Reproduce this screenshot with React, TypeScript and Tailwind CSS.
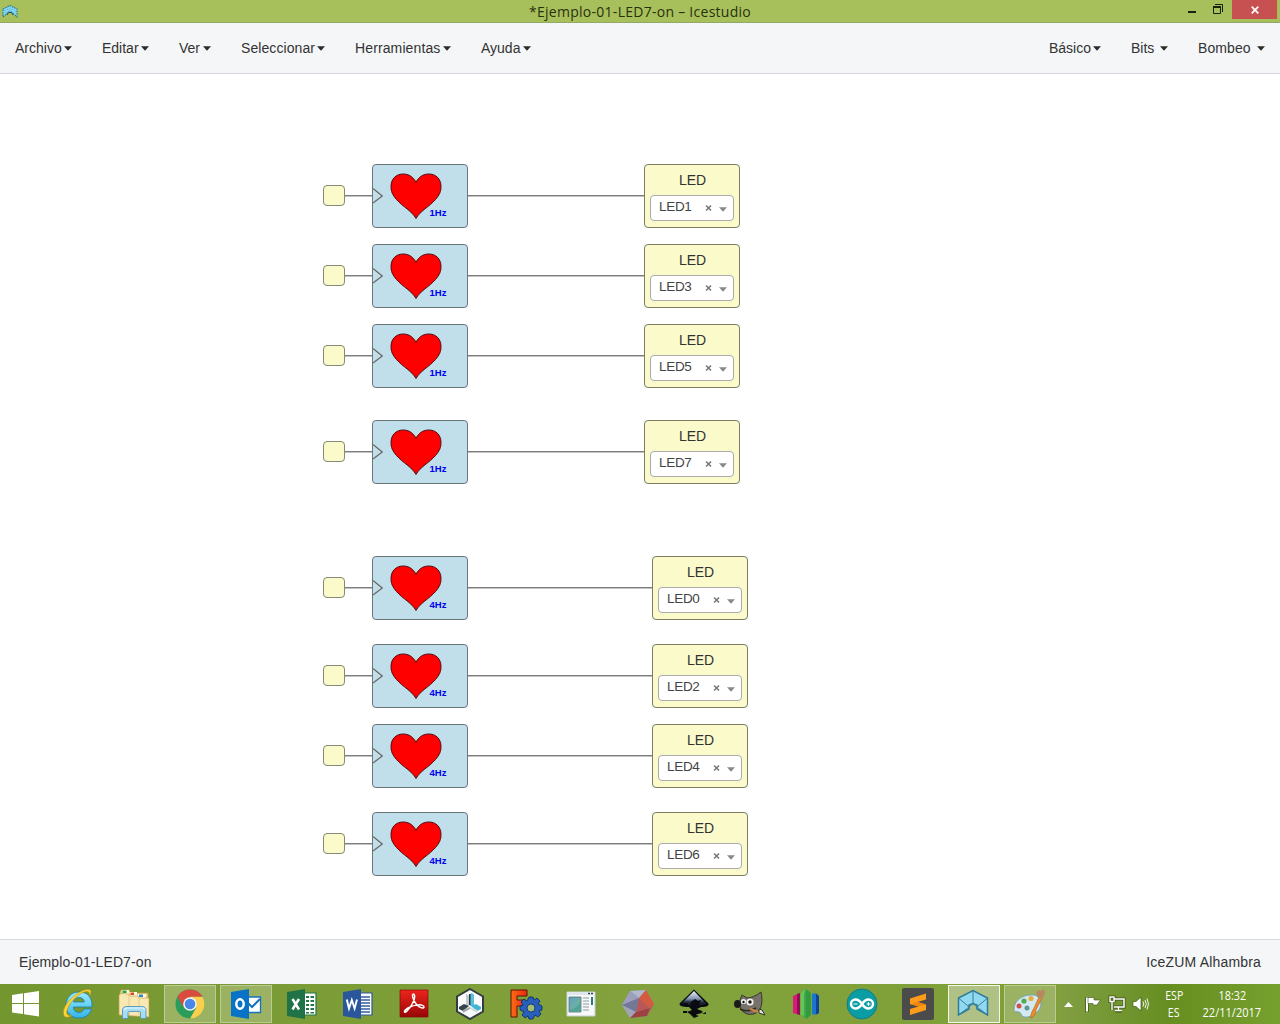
import type { ReactNode } from 'react';

const sans = "font-['Liberation_Sans',Arial,sans-serif]";

function Caret() {
  return (
    <svg width="8" height="5" viewBox="0 0 8 5" className="mt-px shrink-0">
      <path d="M0 .3H8L4 4.700Z" fill="#2b2b2b" />
    </svg>
  );
}

function MenuItem({ label, width, gap = 'gap-[2px]' }: { label: string; width: string; gap?: string }) {
  return (
    <button className={`flex h-[50px] items-center px-[15px] box-content ${gap}`}>
      <span className={`${width} whitespace-nowrap text-left`}>{label}</span>
      <Caret />
    </button>
  );
}

function TitleBar() {
  return (
    <header className="relative flex h-[23px] items-start justify-between border-b border-[#93a866] bg-[#a8c05c]">
      <svg width="16" height="13" viewBox="0 0 16 13" className="ml-[2px] mt-[5px]">
        <path d="M1 4L5 2L8 .5L11 2L15 4V12L11.500 9L9.500 7H6.500L4.500 9L1 12Z" fill="#7fd6f4" stroke="#2f7485" strokeWidth="1.100" strokeDasharray="1.5 1" />
        <path d="M5 2L6.500 7M11 2L9.500 7M1 4L5 9M15 4L11 9M8 1V7" stroke="#4ca5bd" strokeWidth=".7" fill="none" strokeDasharray="1 1" />
        <path d="M5 10L6.500 7.500H9.500L11 10" stroke="#24535f" fill="none" />
      </svg>
      <h1 className="absolute left-[529px] top-[1px] w-[224px] whitespace-nowrap font-['Open_Sans',sans-serif] text-[14px] leading-[21px] tracking-[0.27px] text-[#28310f]">
        *Ejemplo-01-LED7-on – Icestudio
      </h1>
      <div className="flex items-start pr-[3px]">
        <svg width="46" height="19" viewBox="0 0 46 19">
          <path d="M2 11H10V13H2Z" fill="#1c210f" />
          <path d="M27.500 6.500H34.500V13.500H27.500Z" fill="none" stroke="#1c210f" />
          <path d="M27 6H35V8H27Z" fill="#1c210f" />
          <path d="M29 4.500H36.500V12" fill="none" stroke="#1c210f" />
        </svg>
        <div className="flex h-[19px] w-[45px] items-center justify-center bg-[#c75050]">
          <svg width="8" height="8" viewBox="0 0 8 8">
            <path d="M.7 .7L7.300 7.300M7.300 .7L.7 7.300" stroke="#fff" strokeWidth="1.700" />
          </svg>
        </div>
      </div>
    </header>
  );
}

function Heart() {
  return (
    <svg width="52" height="47" viewBox="0 0 52 47" className="absolute left-[16.500px] top-[7.500px]">
      <path
        d="M26 45.500C22 38 13 34 6.500 26.500C2.500 22 1 18.500 1 13.500C1 6 6 1 13 1C19 1 23.500 4 26 9.500C28.500 4 33 1 39 1C46 1 51 6 51 13.500C51 18.500 49.500 22 45.500 26.500C39 34 30 38 26 45.500Z"
        fill="#f00"
        stroke="#4a1010"
      />
    </svg>
  );
}

type Row = { top: string; hz: string; led: string; shifted?: boolean };

const rows: Row[] = [
  { top: 'top-[90px]', hz: '1Hz', led: 'LED1' },
  { top: 'top-[170px]', hz: '1Hz', led: 'LED3' },
  { top: 'top-[250px]', hz: '1Hz', led: 'LED5' },
  { top: 'top-[346px]', hz: '1Hz', led: 'LED7' },
  { top: 'top-[482px]', hz: '4Hz', led: 'LED0', shifted: true },
  { top: 'top-[570px]', hz: '4Hz', led: 'LED2', shifted: true },
  { top: 'top-[650px]', hz: '4Hz', led: 'LED4', shifted: true },
  { top: 'top-[738px]', hz: '4Hz', led: 'LED6', shifted: true },
];

const wire = 'h-[2px] border-t border-b border-t-[#7c7c7c] border-b-[#c4c4c4]';

function Circuit({ top, hz, led, shifted }: Row) {
  return (
    <div className={`absolute left-[323px] flex h-16 items-center ${top}`}>
      <div className="-mt-px h-[21px] w-[22px] rounded-[4px] border border-[#888877] bg-[#fafacb]" />
      <div className={`w-[27px] ${wire}`} />
      <div className="relative h-16 w-24 rounded-[4px] border border-[#6b757a] bg-[#c0dfeb]">
        <svg width="11" height="18" viewBox="0 0 11 18" className="absolute left-0 top-[22px]">
          <path d="M0 1.500L9.300 9L0 16" fill="none" stroke="#666" strokeWidth="1.200" />
        </svg>
        <Heart />
        <span className="absolute left-[56px] top-[42px] w-[18px] text-center text-[9.500px] font-bold leading-[12px] text-[#0000f0]">{hz}</span>
      </div>
      <div className={`${wire} ${shifted ? 'w-[184px]' : 'w-[176px]'}`} />
      <div className="flex h-16 w-24 flex-col items-center rounded-[4px] border border-[#7d7d66] bg-[#fafacb] pt-[7px]">
        <span className="pl-px text-[14px] leading-[17px] tracking-[-0.1px] text-[#333]">LED</span>
        <div className="mt-[6px] flex h-[26px] w-[84px] items-center rounded-[4px] border border-[#aaa] bg-white pl-2 text-[#444]">
          <span className="-mt-[2px] w-[34px] text-[13.500px] leading-[24px] tracking-[-0.3px]">{led}</span>
          <svg width="7" height="6" viewBox="0 0 7 6" className="ml-[12px]">
            <path d="M1 .5L6 5.500M6 .5L1 5.500" stroke="#777" strokeWidth="1.500" />
          </svg>
          <svg width="8" height="5" viewBox="0 0 8 5" className="ml-[7px] mt-[3px]">
            <path d="M0 .3H8L4 4.800Z" fill="#888" />
          </svg>
        </div>
      </div>
    </div>
  );
}

const WindowsIcon = (
  <svg width="28" height="28" viewBox="0 0 28 28" className="-ml-px">
    <path d="M1 5L12 3.300V13H1ZM13 3.200L28 1V13H13ZM1 14H12V24L1 22.500ZM13 14H28V26.500L13 24.200Z" fill="#fff" />
  </svg>
);

const IeIcon = (
  <svg width="32" height="32" viewBox="0 0 32 32">
    <defs>
      <linearGradient id="ie" x2="0" y2="1"><stop stopColor="#9cecff" /><stop offset="1" stopColor="#34b4e8" /></linearGradient>
    </defs>
    <path d="M17 4C9 4 4 10 4 17C4 25 9.500 30 17 30C23 30 27.500 27 29.500 21H22C21 23.500 19.500 24.500 17 24.500C13.500 24.500 11.500 22 11.300 19H30C30.500 10 26 4 17 4ZM11.500 14C12 11 14 9.500 17 9.500C20 9.500 22 11 22.300 14Z" fill="url(#ie)" stroke="#1580b4" strokeWidth=".8" />
    <path d="M27.500 8C30 4 29.500 1 25 1.500C16 2.500 0 16 1.500 26C2.200 30 6 30 10 27.500C6 28 4 26.500 5 22.500C7 14 18 4.500 24 3.500C27 3 28 5 27.500 8Z" fill="#f9d633" stroke="#b98f18" strokeWidth=".6" />
  </svg>
);

const ExplorerIcon = (
  <svg width="34" height="32" viewBox="0 0 34 32">
    <path d="M3 4L4 2H12L14 5H31V27H3Z" fill="#ecd584" stroke="#bd9540" strokeWidth=".8" />
    <path d="M5 2H12V8H5ZM13 4H20V10H13ZM21 6H29V11H21Z" fill="#fff8df" />
    <path d="M5.500 2.500H9.500V5H5.500Z" fill="#23a944" /><path d="M13.500 4.500H17V7H13.500Z" fill="#d34b25" /><path d="M22 6.500H26V9H22Z" fill="#3088c9" />
    <path d="M2 7L4 5.500L12 6L13 8H21L22 10L32 10V29L2 27Z" fill="#f8e9b2" stroke="#c59f50" strokeWidth=".7" />
    <path d="M12 6V27M22 10V27" stroke="#dfc07a" strokeWidth=".8" />
    <path d="M5.500 30.500V22C5.500 19.500 7.500 18.500 10 18.500H25C27.500 18.500 29 20 29 22V30.500H23.500V25C23.500 24 23 23.500 22 23.500H13C11.500 23.500 11 24 11 25V30.500Z" fill="#a8dcf2" stroke="#5594bd" strokeWidth=".9" />
    <path d="M7 22L9 20H26L28 22" fill="none" stroke="#e5f8ff" strokeWidth="1.200" />
  </svg>
);

const ChromeIcon = (
  <svg width="30" height="30" viewBox="0 0 30 30">
    <circle cx="15" cy="15" r="14.500" fill="#2b9d5a" />
    <path d="M2.440 7.750A14.500 14.500 0 0 1 27.560 7.750H15L8.700 18.600Z" fill="#d94b3d" />
    <path d="M27.560 7.750A14.500 14.500 0 0 1 15 29.500L21.300 18.600L15 7.750Z" fill="#f9cf4d" />
    <circle cx="15" cy="15" r="6.800" fill="#f4f4f1" /><circle cx="15" cy="15" r="5.300" fill="#4687e9" />
  </svg>
);

const OutlookIcon = (
  <svg width="32" height="32" viewBox="0 0 32 32">
    <path d="M16 9H30.500V24.500H16Z" fill="#fff" stroke="#1672be" strokeWidth="1.300" />
    <path d="M18 15L22 19L30 11" fill="none" stroke="#1672be" strokeWidth="2" />
    <path d="M1 4L19 1V31L1 28Z" fill="#0873c6" />
    <ellipse cx="10" cy="16" rx="3.700" ry="4.700" fill="none" stroke="#fff" strokeWidth="2.500" />
  </svg>
);

function OfficeIcon({ kind }: { kind: 'X' | 'W' }) {
  const excel = kind === 'X';
  return (
    <svg width="32" height="32" viewBox="0 0 32 32">
      <path d="M17 5H30V27H17Z" fill="#fff" stroke={excel ? '#237746' : '#2b58a0'} strokeWidth="1.200" />
      {excel ? (
        <path d="M20 8H23V10H20ZM24.500 8H28V10H24.500ZM20 12H23V14H20ZM24.500 12H28V14H24.500ZM20 16H23V18H20ZM24.500 16H28V18H24.500ZM20 20H23V22H20ZM24.500 20H28V22H24.500ZM20 24H23V25.500H20ZM24.500 24H28V25.500H24.500Z" fill="#237746" />
      ) : (
        <path d="M19 9H28M19 12H28M19 15H28M19 18H28M19 21H28M19 24H28" stroke="#345f9f" strokeWidth="1.300" />
      )}
      <path d="M1 4L19 1V31L1 28Z" fill={excel ? '#207346' : '#2a579b'} />
      {excel ? (
        <path d="M6.500 11L13 21.500M13 11L6.500 21.500" stroke="#fff" strokeWidth="2.500" />
      ) : (
        <path d="M4.800 11.500L7 20.500L9.800 12L12.600 20.500L15 11.500" stroke="#fff" strokeWidth="1.900" fill="none" />
      )}
    </svg>
  );
}

const AcrobatIcon = (
  <svg width="30" height="30" viewBox="0 0 30 30">
    <defs><linearGradient id="pdf" x2="0" y2="1"><stop stopColor="#ee241d" /><stop offset="1" stopColor="#970606" /></linearGradient></defs>
    <path d="M1 1H29V28H1Z" fill="url(#pdf)" stroke="#880d0a" strokeWidth=".7" />
    <path d="M14.500 5C12.500 5 13.500 11 18 16C21 19 25 20 25 18C25 15 16 15 9 19C4 22 5 25 8 22C12 18 16 11 15.700 7C15.500 5.500 15.200 5 14.500 5Z" fill="none" stroke="#fff" strokeWidth="1.500" />
  </svg>
);

const HexIcon = (
  <svg width="30" height="32" viewBox="0 0 30 32">
    <path d="M15 1L28 8.500V23.500L15 31L2 23.500V8.500Z" fill="#fbfbfb" stroke="#333c43" strokeWidth="2" />
    <path d="M11 6L15 8V17L11 19Z" fill="#c3cbd0" /><path d="M15 6L19 7V18L15 17Z" fill="#2c3b43" />
    <path d="M15 6L17 5L19 7V18H15Z" fill="#56bfda" /><path d="M14 6H15.500V17H14Z" fill="#2c3b43" />
    <path d="M16 18L21 16L26 19V21L22 23Z" fill="#43b5d2" /><path d="M15 19L22 22V25L15 21Z" fill="#d5dcdf" />
    <path d="M14 18L9 16L4 19V21L8 23Z" fill="#37434a" /><path d="M15 19L8 22V25L15 21Z" fill="#a2abb0" />
  </svg>
);

const FreeCadIcon = (
  <svg width="34" height="32" viewBox="0 0 34 32">
    <defs><linearGradient id="fc" x2="1"><stop stopColor="#ff6b16" /><stop offset="1" stopColor="#e82a12" /></linearGradient></defs>
    <path d="M2 2H18V8H8V12H16V18H8V29H2Z" fill="url(#fc)" stroke="#611306" />
    <g transform="translate(22 20)" fill="#285fba" stroke="#07286a" strokeWidth=".8">
      <path d="M-2 -11H2L3 -8L6 -10L9 -7L7 -4L11 -2V2L8 3L10 6L7 9L4 7L2 11H-2L-3 8L-6 10L-9 7L-7 4L-11 2V-2L-8 -3L-10 -6L-7 -9L-4 -7Z" />
      <circle r="4" fill="#a5bc70" />
    </g>
  </svg>
);

const WindowIcon = (
  <svg width="32" height="28" viewBox="0 0 32 28" className="-ml-[2px]">
    <defs><linearGradient id="screen" x2="1" y2="1"><stop stopColor="#609ec3" /><stop offset="1" stopColor="#79bd8a" /></linearGradient></defs>
    <path d="M2 2H30V26H2Z" fill="#f6f8f9" stroke="#c8cfd1" /><path d="M2 2H30V5H2Z" fill="#dfe7ec" />
    <path d="M23 3.500H25M26 3.500H28" stroke="#344752" strokeWidth="1.300" />
    <path d="M4 7H16V22H4Z" fill="url(#screen)" stroke="#527581" strokeWidth=".8" />
    <path d="M5 20Q12 18 15 12V21H5Z" fill="#51a39b" />
    <path d="M18 8H24M18 11H24M18 14H24M18 17H24M18 20H24" stroke="#929b9f" />
    <path d="M26 7H28V15H26Z" fill="#287a80" />
  </svg>
);

const PolyIcon = (
  <svg width="34" height="30" viewBox="0 0 34 30">
    <path d="M9 2L25 1L33 15L26 27L9 29L1 16Z" fill="#8d91ae" />
    <path d="M9 2L25 1L18 9Z" fill="#b4b8cf" /><path d="M9 2L1 16L18 9Z" fill="#9ca0bc" />
    <path d="M1 16L18 9L15 23Z" fill="#747898" /><path d="M1 16L15 23L9 29Z" fill="#a0a4b7" />
    <path d="M18 9L15 23L29 19Z" fill="#b85755" /><path d="M25 1L33 15L29 19L18 9Z" fill="#d45a40" />
    <path d="M29 19L26 27L9 29L15 23Z" fill="#9d4141" /><path d="M29 19L33 15L26 27Z" fill="#c24e45" />
  </svg>
);

const InkscapeIcon = (
  <svg width="32" height="32" viewBox="0 0 32 32">
    <defs><linearGradient id="ink" x2="0" y2="1"><stop stopColor="#eef4ff" /><stop offset=".5" stopColor="#8797b5" /><stop offset=".75" stopColor="#222a3a" /><stop offset="1" stopColor="#131519" /></linearGradient></defs>
    <path d="M16 1.500L30 15C32 18 28 19 23 19L19 21L24 23C27 25 18 26 18 27L21 28L16 30L14 28L12 26L9 24L14 22L11 19C5 19 0 18 2 15Z" fill="#090b10" />
    <path d="M16 3L28 15.500C25 18 20 17 19 18L16 15L12 18L9 15L3.500 15.500Z" fill="url(#ink)" />
    <path d="M13 14L17 11L20 13L23 12L20 19H12Z" fill="#0a0c12" />
    <path d="M5 23H9V25H5ZM24 26L28 24V26Z" fill="#090b10" />
  </svg>
);

const GimpIcon = (
  <svg width="34" height="32" viewBox="0 0 34 32">
    <path d="M7 12L9 7L14 10C18 10 23 8 28 4C30 13 29 22 23 25C16 29 6 24 7 16Z" fill="#777169" stroke="#373630" />
    <ellipse cx="4.500" cy="16" rx="3.500" ry="4" fill="#1b1c1a" />
    <circle cx="10.500" cy="13.500" r="2.600" fill="#eee" /><circle cx="17" cy="14" r="3.600" fill="#eee" />
    <circle cx="10.500" cy="14" r="1.200" fill="#111" /><circle cx="17" cy="14" r="1.700" fill="#111" />
    <path d="M7 21Q15 25 23 20" fill="none" stroke="#292923" strokeWidth="1.500" />
    <path d="M17 21L28 25" stroke="#d0873a" strokeWidth="2" /><path d="M26 21L29 22L32 27L26 25Z" fill="#dbe3e5" stroke="#34342e" />
  </svg>
);

const CrystalsIcon = (
  <svg width="30" height="32" viewBox="0 0 30 32">
    <path d="M2 8L9 5V27L2 25Z" fill="#db1a7c" /><path d="M6 6L9 5V27L6 26Z" fill="#8c1252" />
    <path d="M21 6L24 5L28 8V25L24 27L21 26Z" fill="#1d74cf" /><path d="M25 5.500L28 8V25L25 26.500Z" fill="#0e459a" />
    <path d="M10 5L15 1L20 5V27L15 31L10 27Z" fill="#40a84b" /><path d="M15 1L20 5V27L15 31Z" fill="#329b42" /><path d="M10 5L15 1L13 6V28L10 27Z" fill="#65c65b" />
  </svg>
);

const ArduinoIcon = (
  <svg width="32" height="32" viewBox="0 0 32 32">
    <circle cx="16" cy="16" r="15" fill="#0b9da4" stroke="#117d84" />
    <path d="M16 16C13 11.500 10.500 11.500 9.500 11.500A4.500 4.500 0 0 0 9.500 20.500C12.500 20.500 14 19 16 16C18 13 19.500 11.500 22.500 11.500A4.500 4.500 0 0 1 22.500 20.500C19.500 20.500 18 19 16 16Z" fill="none" stroke="#fff" strokeWidth="2.400" />
    <path d="M7.500 16H11.500M20.500 16H24.500M22.500 14V18" stroke="#fff" strokeWidth="1.200" />
  </svg>
);

const SublimeIcon = (
  <svg width="32" height="32" viewBox="0 0 32 32">
    <rect width="32" height="32" rx="2" fill="#4b4b4b" />
    <path d="M8 10.500L24 5.500V11.500L15.500 14L24 16.500V22L8 27V21L16.500 18.500L8 16Z" fill="#ff9b1b" />
    <path d="M8 16L16.500 18.500L24 16.500L15.500 14Z" fill="#f0870d" />
  </svg>
);

const IcestudioIcon = (
  <svg width="32" height="28" viewBox="0 0 32 28" className="-ml-[2px] -mt-[2px]">
    <path d="M1.500 9L16 1.500L30.500 9V26L20 20V16L16 14.500L12 16V20L1.500 26Z" fill="#91d9f1" stroke="#2e7c98" strokeWidth="1.500" />
    <path d="M16 2V14M1.500 9L12 18L16 14.500L20 18L30.500 9M12 18L1.500 26M20 18L30.500 26" stroke="#367f96" strokeWidth="1" fill="none" />
  </svg>
);

const PaintIcon = (
  <svg width="34" height="32" viewBox="0 0 34 32" className="-ml-[2px]">
    <path d="M19 7C28 6 32 16 26 23C20 30 10 31 9 26C8 22 2 26 2 21C2 14 9 7 19 7Z" fill="#d3e9f4" stroke="#729eb8" strokeWidth=".9" />
    <circle cx="7" cy="18" r="2.500" fill="#d05048" /><circle cx="12" cy="13" r="2.600" fill="#59a849" /><circle cx="19" cy="10.500" r="2.600" fill="#e7ad3b" /><circle cx="15" cy="20" r="2.500" fill="#5f9991" />
    <path d="M19 30C18 26 21 22 22 20L27 9L30 10L24 22C24 26 22 29 19 30Z" fill="#eb8e29" stroke="#a86123" strokeWidth=".6" />
    <path d="M24 5L26 2L29 3L32 1L33 5L30 11L26 9Z" fill="#b88762" />
  </svg>
);

type Task = { id: string; icon: ReactNode; state?: 'open' | 'active' };

const tasks: Task[] = [
  { id: 'ie', icon: IeIcon },
  { id: 'explorer', icon: ExplorerIcon },
  { id: 'chrome', icon: ChromeIcon, state: 'open' },
  { id: 'outlook', icon: OutlookIcon, state: 'open' },
  { id: 'excel', icon: <OfficeIcon kind="X" /> },
  { id: 'word', icon: <OfficeIcon kind="W" /> },
  { id: 'acrobat', icon: AcrobatIcon },
  { id: 'hex', icon: HexIcon },
  { id: 'freecad', icon: FreeCadIcon },
  { id: 'window', icon: WindowIcon },
  { id: 'poly', icon: PolyIcon },
  { id: 'inkscape', icon: InkscapeIcon },
  { id: 'gimp', icon: GimpIcon },
  { id: 'crystals', icon: CrystalsIcon },
  { id: 'arduino', icon: ArduinoIcon },
  { id: 'sublime', icon: SublimeIcon },
  { id: 'icestudio', icon: IcestudioIcon, state: 'active' },
  { id: 'paint', icon: PaintIcon, state: 'open' },
];

const taskStyle = {
  open: 'border border-[#bccb93] bg-[#9ab262]',
  active: 'border border-[#f4f7e6] bg-[#b0c186]',
  idle: '',
};

function Taskbar() {
  return (
    <footer className="flex h-10 bg-linear-to-r from-[#74962f] via-[#83a23d] to-[#7b9f35]">
      <div className="flex w-[50px] items-center justify-center">{WindowsIcon}</div>
      {tasks.map(({ id, icon, state }) => (
        <div key={id} className="flex w-14 items-start justify-center pt-[1px]">
          <button className={`flex h-[38px] w-[52px] items-center justify-center ${taskStyle[state ?? 'idle']}`}>{icon}</button>
        </div>
      ))}
      <div className="flex flex-1 items-center bg-linear-to-r from-[#829f42] via-[#668e20] to-[#76a02e] pl-[6px] font-['Open_Sans',sans-serif] text-white">
        <svg width="9" height="5" viewBox="0 0 9 5"><path d="M0 5L4.500 0L9 5Z" fill="#fff" /></svg>
        <svg width="18" height="18" viewBox="0 0 18 18" className="ml-[11px]">
          <path d="M3 2V17" stroke="#3e551b" strokeWidth="3.500" />
          <path d="M3 2.500V16.500" stroke="#fff" strokeWidth="2" />
          <path d="M4 2.500H10V5H16.500L14.500 7.500L13 10H9V8.500H4Z" fill="#fff" stroke="#3e551b" strokeWidth=".6" />
        </svg>
        <svg width="18" height="18" viewBox="0 0 18 18" className="ml-[6px]">
          <path d="M6 4H16V12H6M4 7V15M7 16H14M10.500 12V16M2 2H6V6.500H2Z" fill="none" stroke="#3e551b" strokeWidth="3" />
          <path d="M6 4H16V12H6" fill="none" stroke="#fff" strokeWidth="1.500" />
          <path d="M2 2H6V6.500H2ZM4 6.500V15M7 15.500H14M10.500 12V15.500" fill="none" stroke="#fff" strokeWidth="1.400" />
        </svg>
        <svg width="18" height="18" viewBox="0 0 18 18" className="ml-[6px]">
          <path d="M1 6.500H4L9 2V16L4 11.500H1Z" fill="#fff" stroke="#3e551b" strokeWidth=".7" />
          <path d="M11 6.500Q12.500 9 11 11.500M13 5Q15.500 9 13 13M15 3.500Q18 9 15 14.500" fill="none" stroke="#fff" strokeWidth=".9" />
        </svg>
        <div className="ml-[11px] flex w-[26px] flex-col items-center text-[12px] leading-[17px]">
          <span className="origin-center scale-x-[.88]">ESP</span><span className="origin-center scale-x-[.88]">ES</span>
        </div>
        <div className="ml-[13px] flex w-[64px] flex-col items-center whitespace-nowrap text-[12px] leading-[17px]">
          <span className="origin-center scale-x-[.9]">18:32</span><span className="origin-center scale-x-[.92]">22/11/2017</span>
        </div>
      </div>
    </footer>
  );
}

export default function App() {
  return (
    <div className={`flex h-[1024px] w-[1280px] flex-col overflow-hidden bg-white text-[14px] text-[#333] ${sans}`}>
      <TitleBar />
      <nav className="flex h-[51px] justify-between border-b border-[#d5d8dc] bg-[#f5f6f8]">
        <div className="flex">
          <MenuItem label="Archivo" width="w-[47px]" />
          <MenuItem label="Editar" width="w-[37px]" />
          <MenuItem label="Ver" width="w-[22px]" />
          <MenuItem label="Seleccionar" width="w-[74px] tracking-[0.08px]" />
          <MenuItem label="Herramientas" width="w-[86px] tracking-[0.12px]" />
          <MenuItem label="Ayuda" width="w-[40px]" />
        </div>
        <div className="flex">
          <MenuItem label="Básico" width="w-[42px]" />
          <MenuItem label="Bits" width="w-[23px]" gap="gap-[6px]" />
          <MenuItem label="Bombeo" width="w-[53px] tracking-[0.1px]" gap="gap-[6px]" />
        </div>
      </nav>
      <main className="relative flex-1">
        {rows.map((row) => <Circuit key={row.led} {...row} />)}
      </main>
      <div className="flex h-[45px] items-center justify-between border-t border-[#d5d8dc] bg-[#f5f6f8] px-[19px]">
        <span className="tracking-[0.1px]">Ejemplo-01-LED7-on</span>
        <span className="tracking-[0.18px]">IceZUM Alhambra</span>
      </div>
      <Taskbar />
    </div>
  );
}
